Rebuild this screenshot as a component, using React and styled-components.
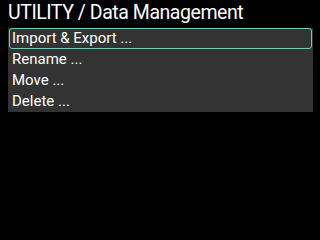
import styled, { createGlobalStyle } from 'styled-components';

const GlobalStyle = createGlobalStyle`
  html, body {
    margin: 0;
    padding: 0;
    background: #000;
  }
  body {
    width: 320px;
    height: 240px;
    overflow: hidden;
    font-family: Roboto, "Liberation Sans", sans-serif;
  }
`

const Screen = styled.div`
  width: 320px;
  height: 240px;
  background: #000;
  padding: 0 7px 0 8px;
  box-sizing: border-box;
`

const Title = styled.div`
  color: #fff;
  font-size: 19.5px;
  letter-spacing: -0.45px;
  line-height: 25px;
  height: 28px;
  white-space: nowrap;
`

const Menu = styled.div`
  display: flex;
  flex-direction: column;
  background: #333333;
`

const Item = styled.div`
  height: 21px;
  box-sizing: border-box;
  padding-left: 2px;
  color: #fff;
  font-size: 15px;
  line-height: 19px;
  white-space: nowrap;
  border: 1px solid ${p => (p.selected ? '#3ee6bd' : 'transparent')};
  border-radius: 3px;
  margin: 0 1px;
  display: flex;
  align-items: center;
`

const items = ['Import & Export ...', 'Rename ...', 'Move ...', 'Delete ...'];

function App() {
  return (
    <Screen>
      <GlobalStyle />
      <Title>UTILITY / Data Management</Title>
      <Menu>
        {items.map((label, i) => (
          <Item key={label} selected={i === 0}>{label}</Item>
        ))}
      </Menu>
    </Screen>
  );
}

export default App;
